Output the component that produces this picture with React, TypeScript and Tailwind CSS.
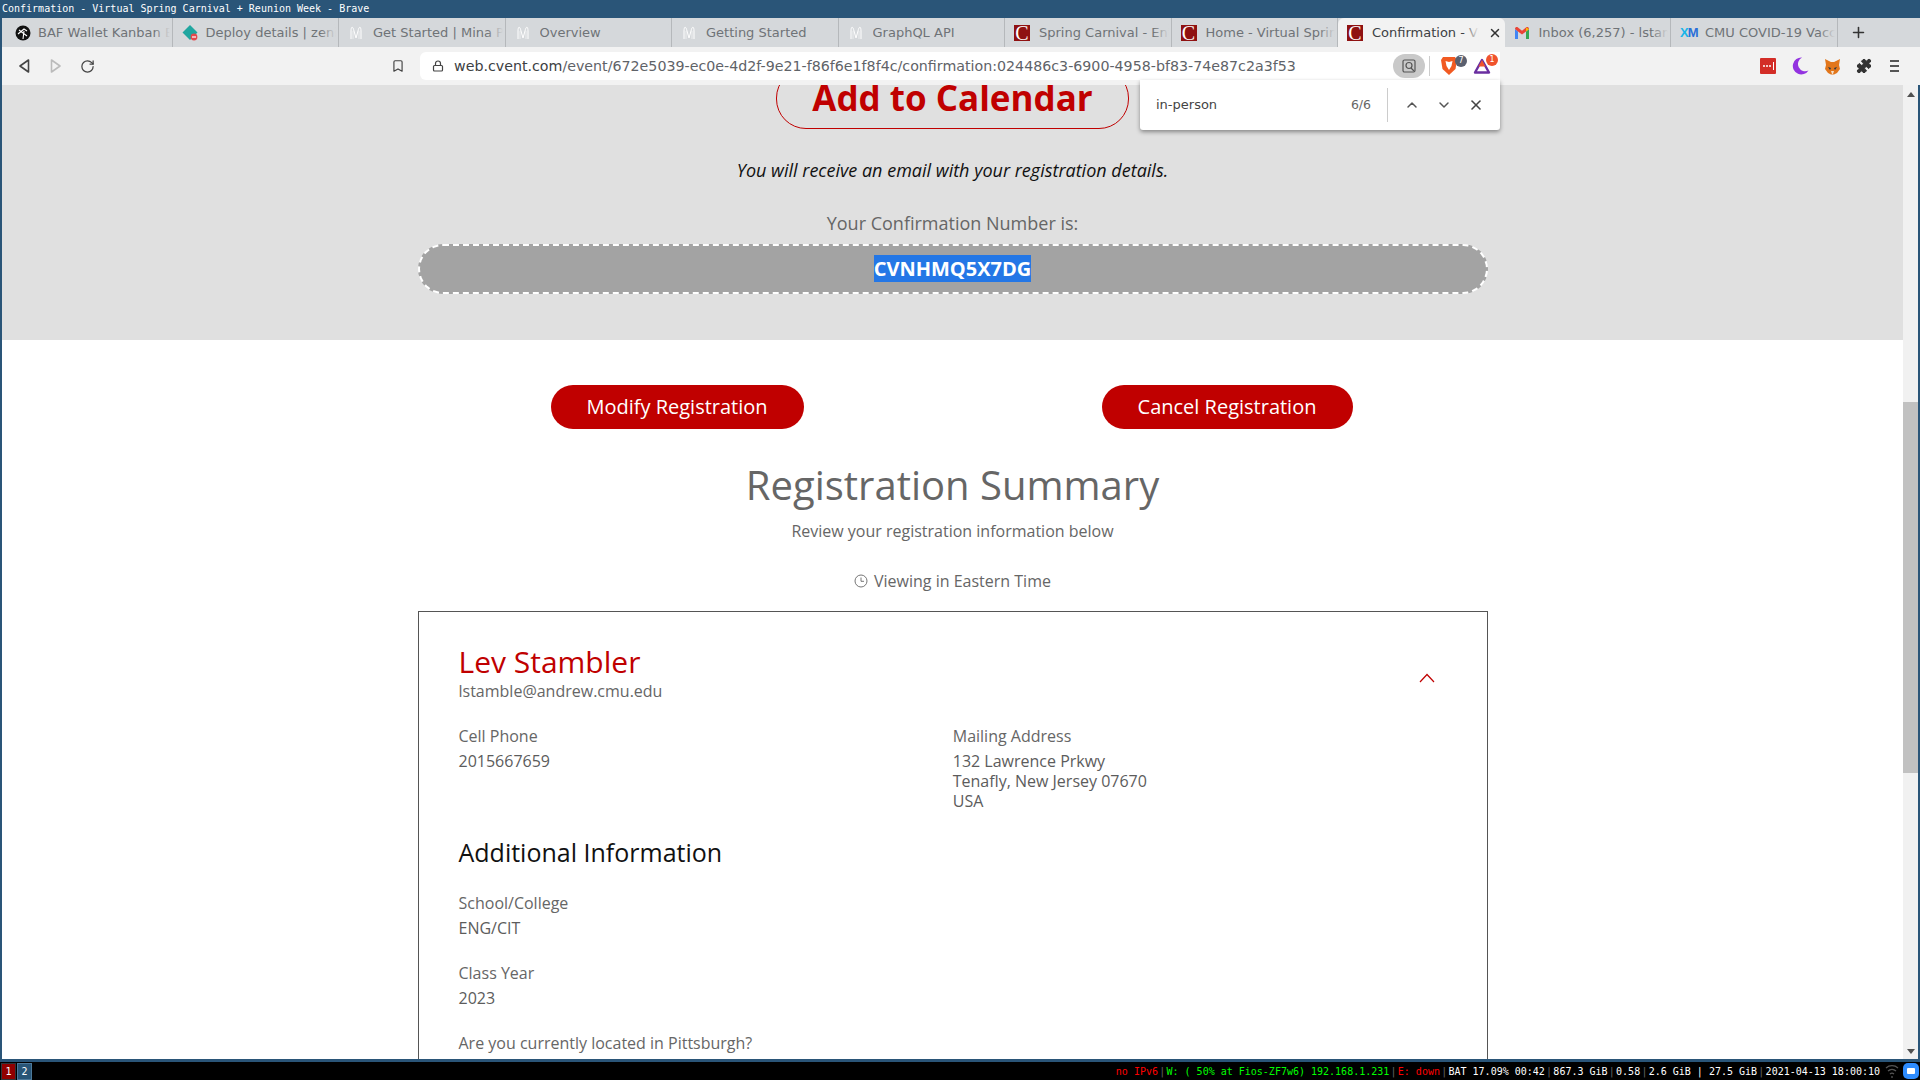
import React from 'react';
import { ChevronUp, ChevronDown, X, RotateCw, Bookmark, Lock, Plus, Puzzle } from 'lucide-react';

const Cvent = () => (
  <span className="w-4 h-4 bg-[#8f1111] text-white flex items-center justify-center shrink-0 overflow-hidden font-['Liberation_Serif',serif] text-[20px] leading-none">C</span>
);

const Mina = () => (
  <svg width="16" height="16" viewBox="0 0 16 16" fill="none" stroke="#fff" strokeWidth="1" className="shrink-0">
    <path d="M3 14V6c0-5 2-5 3 0l2 7 2-7c1-5 3-5 3 0v8" />
    <path d="M5 14V6M11 14V6" strokeWidth="0.6" />
  </svg>
);

const Baf = () => (
  <svg width="16" height="16" viewBox="0 0 16 16" className="shrink-0 -mr-[2px]">
    <circle cx="8" cy="8" r="7.5" fill="#111" />
    <path d="M4 5l8 6M3 9l6-5 3 2M8 14l1-8" stroke="#fff" strokeWidth="1.1" fill="none" />
  </svg>
);

const Netlify = () => (
  <svg width="18" height="18" viewBox="0 0 18 18" className="shrink-0 -mr-[3px]">
    <path d="M8 1l7.5 7.5L8 16 .5 8.5z" fill="#20a6a0" />
    <circle cx="12" cy="13" r="3.4" fill="#e5484d" />
    <rect x="10" y="12.4" width="4" height="1.2" fill="#fff" />
  </svg>
);

const Gmail = () => (
  <svg width="16" height="14" viewBox="0 0 16 14" className="shrink-0">
    <path d="M1 13V3l3 2.4V13z" fill="#4285f4" />
    <path d="M15 13V3l-3 2.4V13z" fill="#34a853" />
    <path d="M1 3c0-2 2-2.500 3-1.500L8 4.700l4-3.200c1-1 3-.5 3 1.500L12 5.400 8 8.500 4 5.400z" fill="#ea4335" />
    <path d="M12 1.500 15 3l-3 2.400z" fill="#fbbc04" />
  </svg>
);

const XmIcon = () => (
  <span className="w-[17px] -mr-[1px] shrink-0 font-['Liberation_Sans',sans-serif] text-[13px] font-bold tracking-[-1px] leading-none">
    <span className="text-[#19b5e8]">X</span><span className="text-[#2a6fd8]">M</span>
  </span>
);

const tabs: { title: string; icon: React.ReactNode; active?: boolean }[] = [
  { title: 'BAF Wallet Kanban Board', icon: <Baf /> },
  { title: 'Deploy details | zenith', icon: <Netlify /> },
  { title: 'Get Started | Mina Protocol', icon: <Mina /> },
  { title: 'Overview', icon: <Mina /> },
  { title: 'Getting Started', icon: <Mina /> },
  { title: 'GraphQL API', icon: <Mina /> },
  { title: 'Spring Carnival - Enter', icon: <Cvent /> },
  { title: 'Home - Virtual Spring', icon: <Cvent /> },
  { title: 'Confirmation - Virtual', icon: <Cvent />, active: true },
  { title: 'Inbox (6,257) - lstamble', icon: <Gmail /> },
  { title: 'CMU COVID-19 Vaccine', icon: <XmIcon /> },
];

const Field = ({ label, children }: { label: string; children: React.ReactNode }) => (
  <div>
    <div className="text-[16px] leading-[20px] text-[#666]">{label}</div>
    <div className="mt-[5px] text-[16px] leading-[20px] text-[#5c5c5c]">{children}</div>
  </div>
);

export default function App() {
  return (
    <div className="w-[1920px] h-[1080px] overflow-hidden bg-[#2a5578] flex flex-col relative">
      {/* Window title */}
      <div className="h-[18px] px-[2px] text-white text-[10px] leading-[18px] font-['DejaVu_Sans_Mono',monospace] whitespace-pre">
        Confirmation - Virtual Spring Carnival + Reunion Week - Brave
      </div>

      {/* Tabs */}
      <div className="h-[29px] ml-[2px] bg-[#d5d8db] flex items-stretch pl-[4px] font-['DejaVu_Sans',sans-serif]">
        {tabs.map(t => (
          <div
            key={t.title}
            className={`w-[166.5px] shrink-0 flex items-center gap-[9px] pl-[9px] ${t.active ? 'bg-[#f2f2f2] rounded-t-[6px] pr-[3px]' : 'border-r border-[#b5b8bb] pr-[2px]'}`}
          >
            {t.icon}
            <span className={`relative text-[13px] whitespace-nowrap overflow-hidden flex-1 ${t.active ? 'text-[#3c4043]' : 'text-[#6f7377]'}`}>
              {t.title}
              <span className={`absolute right-0 top-0 bottom-0 w-[16px] bg-gradient-to-r from-transparent ${t.active ? 'to-[#f2f2f2]' : 'to-[#d5d8db]'}`} />
            </span>
            {t.active && <X className="w-[14px] h-[14px] text-[#333] shrink-0" strokeWidth={2.5} />}
          </div>
        ))}
        <Plus className="w-[17px] h-[17px] text-[#333] self-center ml-[12px]" strokeWidth={2.2} />
      </div>

      {/* Toolbar */}
      <div className="h-[38px] ml-[2px] bg-[#f2f2f2] flex items-center font-['DejaVu_Sans',sans-serif]">
        <div className="w-[418px] flex items-center pl-[15px] shrink-0">
          <svg width="14" height="16" viewBox="0 0 14 16" fill="none" stroke="#444" strokeWidth="1.6"><path d="M11.500 2 3 8l8.500 6z" strokeLinejoin="round" /></svg>
          <svg className="ml-[18px]" width="14" height="16" viewBox="0 0 14 16" fill="none" stroke="#bbb" strokeWidth="1.6"><path d="M2.500 2 11 8l-8.500 6z" strokeLinejoin="round" /></svg>
          <RotateCw className="ml-[17px] w-[15px] h-[15px] text-[#444]" strokeWidth={2} />
          <Bookmark className="ml-[296px] w-[14px] h-[16px] text-[#444]" strokeWidth={2} />
        </div>
        <div className="w-[1080px] h-[28px] bg-white rounded-l-[6px] flex items-center pl-[12px] shrink-0">
          <Lock className="w-[12px] h-[12px] text-[#444]" strokeWidth={2.4} />
          <span className="ml-[10px] mt-[1px] text-[14.22px] whitespace-nowrap text-[#5f6368]">
            <span className="text-[#3c4043]">web.cvent.com</span>/event/672e5039-ec0e-4d2f-9e21-f86f6e1f8f4c/confirmation:024486c3-6900-4958-bf83-74e87c2a3f53
          </span>
          <div className="ml-auto flex items-center">
            <span className="w-[32px] h-[24px] rounded-full bg-[#c9c9c9] flex items-center justify-center">
              <svg width="16" height="16" viewBox="0 0 16 16" fill="none" stroke="#555" strokeWidth="1.200">
                <rect x="2" y="2" width="12" height="12" rx="1.500" />
                <circle cx="8" cy="7.500" r="3" />
                <path d="M10 10l3 3" />
              </svg>
            </span>
            <span className="w-px h-[20px] bg-[#ccc] ml-[4px]" />
            <span className="relative ml-[10px] w-[18px] h-[20px]">
              <svg width="18" height="20" viewBox="0 0 18 20">
                <path d="M3 1h12l2 3-1.500 9L9 19l-6.500-6L1 4z" fill="#f15a22" />
                <path d="M5.500 5l3.500 1 3.500-1-1 5-2.500 4-2.500-4z" fill="#fff" />
              </svg>
              <span className="absolute -top-[1px] -right-[9px] w-[12px] h-[12px] rounded-full bg-[#5a5f6e] text-white text-[8px] leading-[12px] text-center">7</span>
            </span>
            <span className="relative ml-[15px] mr-[9px] w-[18px] h-[18px]">
              <svg width="18" height="18" viewBox="0 0 18 18" fill="none">
                <path d="M9 3 16 15.500H2z" stroke="#6a2fa0" strokeWidth="2.400" strokeLinejoin="round" />
                <path d="M9 3 12.500 9.500H5.500z" fill="#f0532d" />
              </svg>
              <span className="absolute -top-[3px] -right-[7px] w-[12px] h-[12px] rounded-full bg-[#f0532d] text-white text-[8px] leading-[12px] text-center">1</span>
            </span>
          </div>
        </div>
        <div className="flex-1 flex items-center pl-[260px]">
          <span className="w-[16px] h-[16px] bg-[#d32d27] rounded-[1px] flex items-center justify-center gap-[1px]">
            <span className="w-[2px] h-[2px] bg-white rounded-full" /><span className="w-[2px] h-[2px] bg-white rounded-full" /><span className="w-[2px] h-[2px] bg-white rounded-full" /><span className="w-px h-[8px] bg-white ml-[1px]" />
          </span>
          <svg className="ml-[16px]" width="17" height="18" viewBox="0 0 17 18"><path d="M10 .5a8.500 8.500 0 1 0 6.500 13A7 7 0 0 1 10 .5z" fill="#9333e0" /></svg>
          <svg className="ml-[15px]" width="17" height="17" viewBox="0 0 17 17">
            <path d="M1 1l6 3h3l6-3-1 6 1 4-3 4-3 1.500H7L4 15l-3-4 1-4z" fill="#e2761b" />
            <path d="M4 9l3 1-1 2zM13 9l-3 1 1 2z" fill="#233447" />
            <path d="M7 13h3l-1 3H8z" fill="#f5e0c8" />
          </svg>
          <Puzzle className="ml-[15px] w-[16px] h-[16px] text-[#333] fill-[#333]" strokeWidth={1.5} />
          <span className="ml-[18px] flex flex-col gap-[3px]">
            <span className="w-[9px] h-[2px] bg-[#555]" /><span className="w-[9px] h-[2px] bg-[#555]" /><span className="w-[9px] h-[2px] bg-[#555]" />
          </span>
        </div>
      </div>

      {/* Find in page */}
      <div className="absolute left-[1140px] top-[80px] w-[360px] h-[50px] bg-white rounded-b-[3px] shadow-[0_2px_4px_rgba(0,0,0,0.4)] flex items-center font-['DejaVu_Sans',sans-serif] text-[#444] z-10">
        <span className="ml-[16px] text-[13px]">in-person</span>
        <span className="ml-auto text-[12.500px] text-[#666]">6/6</span>
        <span className="ml-[16px] w-px h-[34px] bg-[#ccc]" />
        <ChevronUp className="ml-[16px] w-[16px] h-[16px] text-[#555]" strokeWidth={2.2} />
        <ChevronDown className="ml-[16px] w-[16px] h-[16px] text-[#555]" strokeWidth={2.2} />
        <X className="ml-[16px] mr-[16px] w-[16px] h-[16px] text-[#444]" strokeWidth={2.4} />
      </div>

      {/* Page */}
      <div className="h-[974px] ml-[2px] mr-[2px] flex overflow-hidden font-['Open_Sans',sans-serif]">
        <div className="w-[1901px] bg-white shrink-0">
          <div className="h-[255px] bg-[#e0e0e0] overflow-hidden flex flex-col items-center">
            <div className="-mt-[17px] w-[353px] h-[61px] shrink-0 border border-[#c00000] rounded-[30px] flex items-center justify-center text-[35px] font-bold text-[#c00000]">
              Add to Calendar
            </div>
            <div className="mt-[29px] text-[18px] leading-[24px] italic text-[#111]">You will receive an email with your registration details.</div>
            <div className="mt-[29px] text-[18px] leading-[24px] text-[#666]">Your Confirmation Number is:</div>
            <div className="mt-[9px] w-[1070px] h-[50px] shrink-0 bg-[#a3a3a3] border-2 border-dashed border-white rounded-[25px] flex items-center justify-center">
              <span className="bg-[#2477e6] text-white text-[20px] leading-[27px] font-bold -mt-[1px]">CVNHMQ5X7DG</span>
            </div>
          </div>

          <div className="flex justify-center gap-[298px] mt-[45px] -translate-x-[1px]">
            <div className="w-[253px] h-[44px] rounded-[22px] bg-[#c00000] text-white text-[20px] flex items-center justify-center">Modify Registration</div>
            <div className="w-[251px] h-[44px] rounded-[22px] bg-[#c00000] text-white text-[20px] flex items-center justify-center">Cancel Registration</div>
          </div>

          <div className="mt-[29px] text-center text-[40px] leading-[54px] text-[#666]">Registration Summary</div>
          <div className="mt-[7px] text-center text-[16px] leading-[24px] text-[#666]">Review your registration information below</div>
          <div className="mt-[26px] flex items-center justify-center gap-[6px] text-[16px] leading-[24px] text-[#666]">
            <svg width="14" height="14" viewBox="0 0 14 14" fill="none" stroke="#666" strokeWidth="0.9"><circle cx="7" cy="7" r="6" /><path d="M7 3.500V7.300H10" /></svg>
            Viewing in Eastern Time
          </div>

          <div className="mt-[18px] ml-[416px] w-[1070px] h-[460px] border border-[#555] border-b-0 pl-[39.500px] pr-[40px] relative">
            <svg className="absolute right-[52px] top-[61px]" width="16" height="10" viewBox="0 0 16 10" fill="none" stroke="#c00000" strokeWidth="1.200"><path d="M1 9l7-7.500L15 9" /></svg>
            <div className="mt-[30px] text-[30px] leading-[40px] text-[#c00000]">Lev Stambler</div>
            <div className="text-[16px] leading-[20px] text-[#666] mt-[-1px]">lstamble@andrew.cmu.edu</div>
            <div className="mt-[25px] grid grid-cols-2">
              <Field label="Cell Phone">2015667659</Field>
              <Field label="Mailing Address">
                <div>132 Lawrence Prkwy</div>
                <div>Tenafly, New Jersey 07670</div>
                <div>USA</div>
              </Field>
            </div>
            <div className="mt-[24px] text-[25px] leading-[34px] text-[#111]">Additional Information</div>
            <div className="mt-[24px] flex flex-col gap-[25px]">
              <Field label="School/College">ENG/CIT</Field>
              <Field label="Class Year">2023</Field>
              <Field label="Are you currently located in Pittsburgh?">No</Field>
            </div>
          </div>
        </div>

        {/* Scrollbar */}
        <div className="w-[15px] bg-[#f1f1f1] flex flex-col items-center justify-between relative pt-[7px] pb-[5px]">
          <span className="w-0 h-0 border-x-[4px] border-x-transparent border-b-[5px] border-b-[#505050]" />
          <span className="absolute left-0 top-[317px] w-[15px] h-[371px] bg-[#c1c1c1]" />
          <span className="w-0 h-0 border-x-[4px] border-x-transparent border-t-[5px] border-t-[#505050]" />
        </div>
      </div>

      {/* i3 bar */}
      <div className="mt-[3px] h-[18px] bg-black flex items-center font-['DejaVu_Sans_Mono',monospace] text-[10px] whitespace-pre">
        <span className="ml-[1px] w-[15px] h-[17px] bg-[#900000] border border-[#2f343a] text-white text-center leading-[15px]">1</span>
        <span className="ml-[1px] w-[15px] h-[17px] bg-[#285577] border border-[#4c7899] text-white text-center leading-[15px]">2</span>
        <div className="ml-auto flex items-center">
          <span className="text-[#ff0000]">no IPv6</span><span className="text-[#666] mx-[1.250px]">|</span>
          <span className="text-[#00ff00]">W: ( 50% at Fios-ZF7w6) 192.168.1.231</span><span className="text-[#666] mx-[1.250px]">|</span>
          <span className="text-[#ff0000]">E: down</span><span className="text-[#666] mx-[1.250px]">|</span>
          <span className="text-white">BAT 17.09% 00:42</span><span className="text-[#666] mx-[1.250px]">|</span>
          <span className="text-white">867.3 GiB</span><span className="text-[#666] mx-[1.250px]">|</span>
          <span className="text-white">0.58</span><span className="text-[#666] mx-[1.250px]">|</span>
          <span className="text-white">2.6 GiB | 27.5 GiB</span><span className="text-[#666] mx-[1.250px]">|</span>
          <span className="text-white">2021-04-13 18:00:10</span>
          <svg className="ml-[5px]" width="14" height="16" viewBox="0 0 14 16" fill="none" stroke="#555" strokeWidth="1.300">
            <path d="M1 5a9 9 0 0 1 12 0M3 8a6 6 0 0 1 8 0M5 11a3 3 0 0 1 4 0" /><path d="M7 13v2" />
          </svg>
          <span className="ml-[4px] mr-[1px] w-[16px] h-[16px] rounded-[5px] bg-[#2d8cff] flex items-center justify-center">
            <span className="w-[8px] h-[6px] bg-white rounded-[1px]" />
          </span>
        </div>
      </div>
    </div>
  );
}
